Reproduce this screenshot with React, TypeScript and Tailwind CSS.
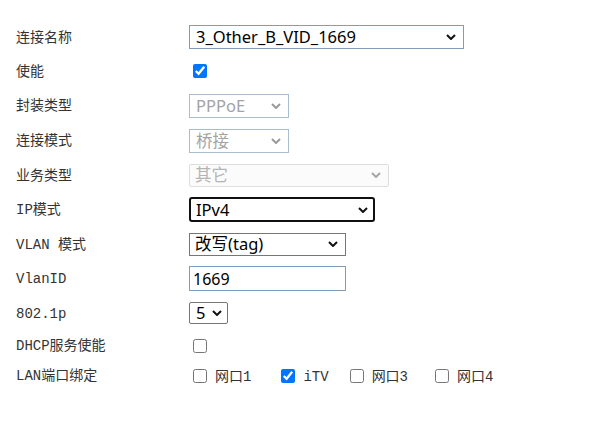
import React from 'react';

const labelFont = "font-['Liberation_Mono','Noto_Sans_CJK_SC',monospace]";
const ctrlFont = "font-['Noto_Sans','Noto_Sans_CJK_SC',sans-serif]";

type RowProps = {
  label: string;
  h: string;
  children: React.ReactNode;
};

function Row({ label, h, children }: RowProps) {
  return (
    <div className={`flex items-center ${h}`}>
      <div className={`mt-[2px] w-[173px] shrink-0 text-[14px] text-[#333] ${labelFont}`}>{label}</div>
      <div className="flex items-center">{children}</div>
    </div>
  );
}

function Check({ checked = false }: { checked?: boolean }) {
  return (
    <input
      type="checkbox"
      defaultChecked={checked}
      className="ml-[4px] mr-[3px] h-[14px] w-[14px] accent-[#0075ff]"
    />
  );
}

type SelectProps = {
  value: string;
  className: string;
  disabled?: boolean;
  arrow: string;
  arrowRight: string;
};

function Select({ value, className, disabled, arrow, arrowRight }: SelectProps) {
  return (
    <span className="relative inline-flex">
      <select
        disabled={disabled}
        className={`appearance-none py-0 text-[16.5px] leading-[20px] ${ctrlFont} ${className}`}
      >
        <option>{value}</option>
      </select>
      <svg
        viewBox="0 0 10 6"
        className={`pointer-events-none absolute top-1/2 h-[6px] w-[10px] -translate-y-1/2 ${arrowRight}`}
      >
        <polyline points="1,1 5,5 9,1" fill="none" stroke={arrow} strokeWidth="2" />
      </svg>
    </span>
  );
}

const ports = [
  { name: '网口1', on: false, gap: 'mr-[26px]' },
  { name: 'iTV', on: true, gap: 'mr-[17px]' },
  { name: '网口3', on: false, gap: 'mr-[23px]' },
  { name: '网口4', on: false, gap: 'mr-0' },
];

export default function App() {
  return (
    <div className="h-[424px] w-[594px] bg-white pt-[20px] pl-[16px]">
      <Row label="连接名称" h="h-[34px]">
        <Select
          value="3_Other_B_VID_1669"
          arrow="#111"
          arrowRight="right-[8px]"
          className="h-[24px] w-[275px] border border-[#7f9db9] bg-white pl-[6px] text-black"
        />
      </Row>
      <Row label="使能" h="h-[34px]">
        <Check checked />
      </Row>
      <Row label="封装类型" h="h-[35px]">
        <Select
          disabled
          value="PPPoE"
          arrow="#9a9a9a"
          arrowRight="right-[8px]"
          className="h-[24px] w-[100px] border border-[#a9bdd1] bg-white pl-[6px] text-[#a3a3a3]"
        />
      </Row>
      <Row label="连接模式" h="h-[35px]">
        <Select
          disabled
          value="桥接"
          arrow="#9a9a9a"
          arrowRight="right-[8px]"
          className="h-[24px] w-[100px] border border-[#a9bdd1] bg-white pl-[6px] text-[#a3a3a3]"
        />
      </Row>
      <Row label="业务类型" h="h-[34px]">
        <Select
          disabled
          value="其它"
          arrow="#a6a6a6"
          arrowRight="right-[8px]"
          className="h-[23px] w-[200px] rounded-[2px] border border-[#dedede] bg-[#fbfbfb] pl-[5px] text-[#b4b4b4]"
        />
      </Row>
      <Row label="IP模式" h="h-[35px]">
        <Select
          value="IPv4"
          arrow="#111"
          arrowRight="right-[7px]"
          className="h-[25px] w-[186px] rounded-[3px] border-2 border-[#101010] bg-white pl-[5px] text-black"
        />
      </Row>
      <Row label="VLAN 模式" h="h-[34px]">
        <Select
          value="改写(tag)"
          arrow="#111"
          arrowRight="right-[8px]"
          className="h-[23px] w-[157px] border border-[#767676] bg-white pl-[5px] text-black"
        />
      </Row>
      <Row label="VlanID" h="h-[35px]">
        <input
          defaultValue="1669"
          className={`h-[25px] w-[157px] border border-[#7f9db9] bg-white px-[3px] text-[16px] text-black ${ctrlFont}`}
        />
      </Row>
      <Row label="802.1p" h="h-[34px]">
        <Select
          value="5"
          arrow="#111"
          arrowRight="right-[6px]"
          className="h-[22px] w-[39px] rounded-[2px] border border-[#767676] bg-white pl-[6px] text-black"
        />
      </Row>
      <Row label="DHCP服务使能" h="h-[31px]">
        <Check />
      </Row>
      <Row label="LAN端口绑定" h="h-[29px]">
        {ports.map((p) => (
          <label key={p.name} className={`flex items-center ${p.gap}`}>
            <Check checked={p.on} />
            <span className={`ml-[5px] mt-[3px] text-[14px] text-[#333] ${labelFont}`}>{p.name}</span>
          </label>
        ))}
      </Row>
    </div>
  );
}
